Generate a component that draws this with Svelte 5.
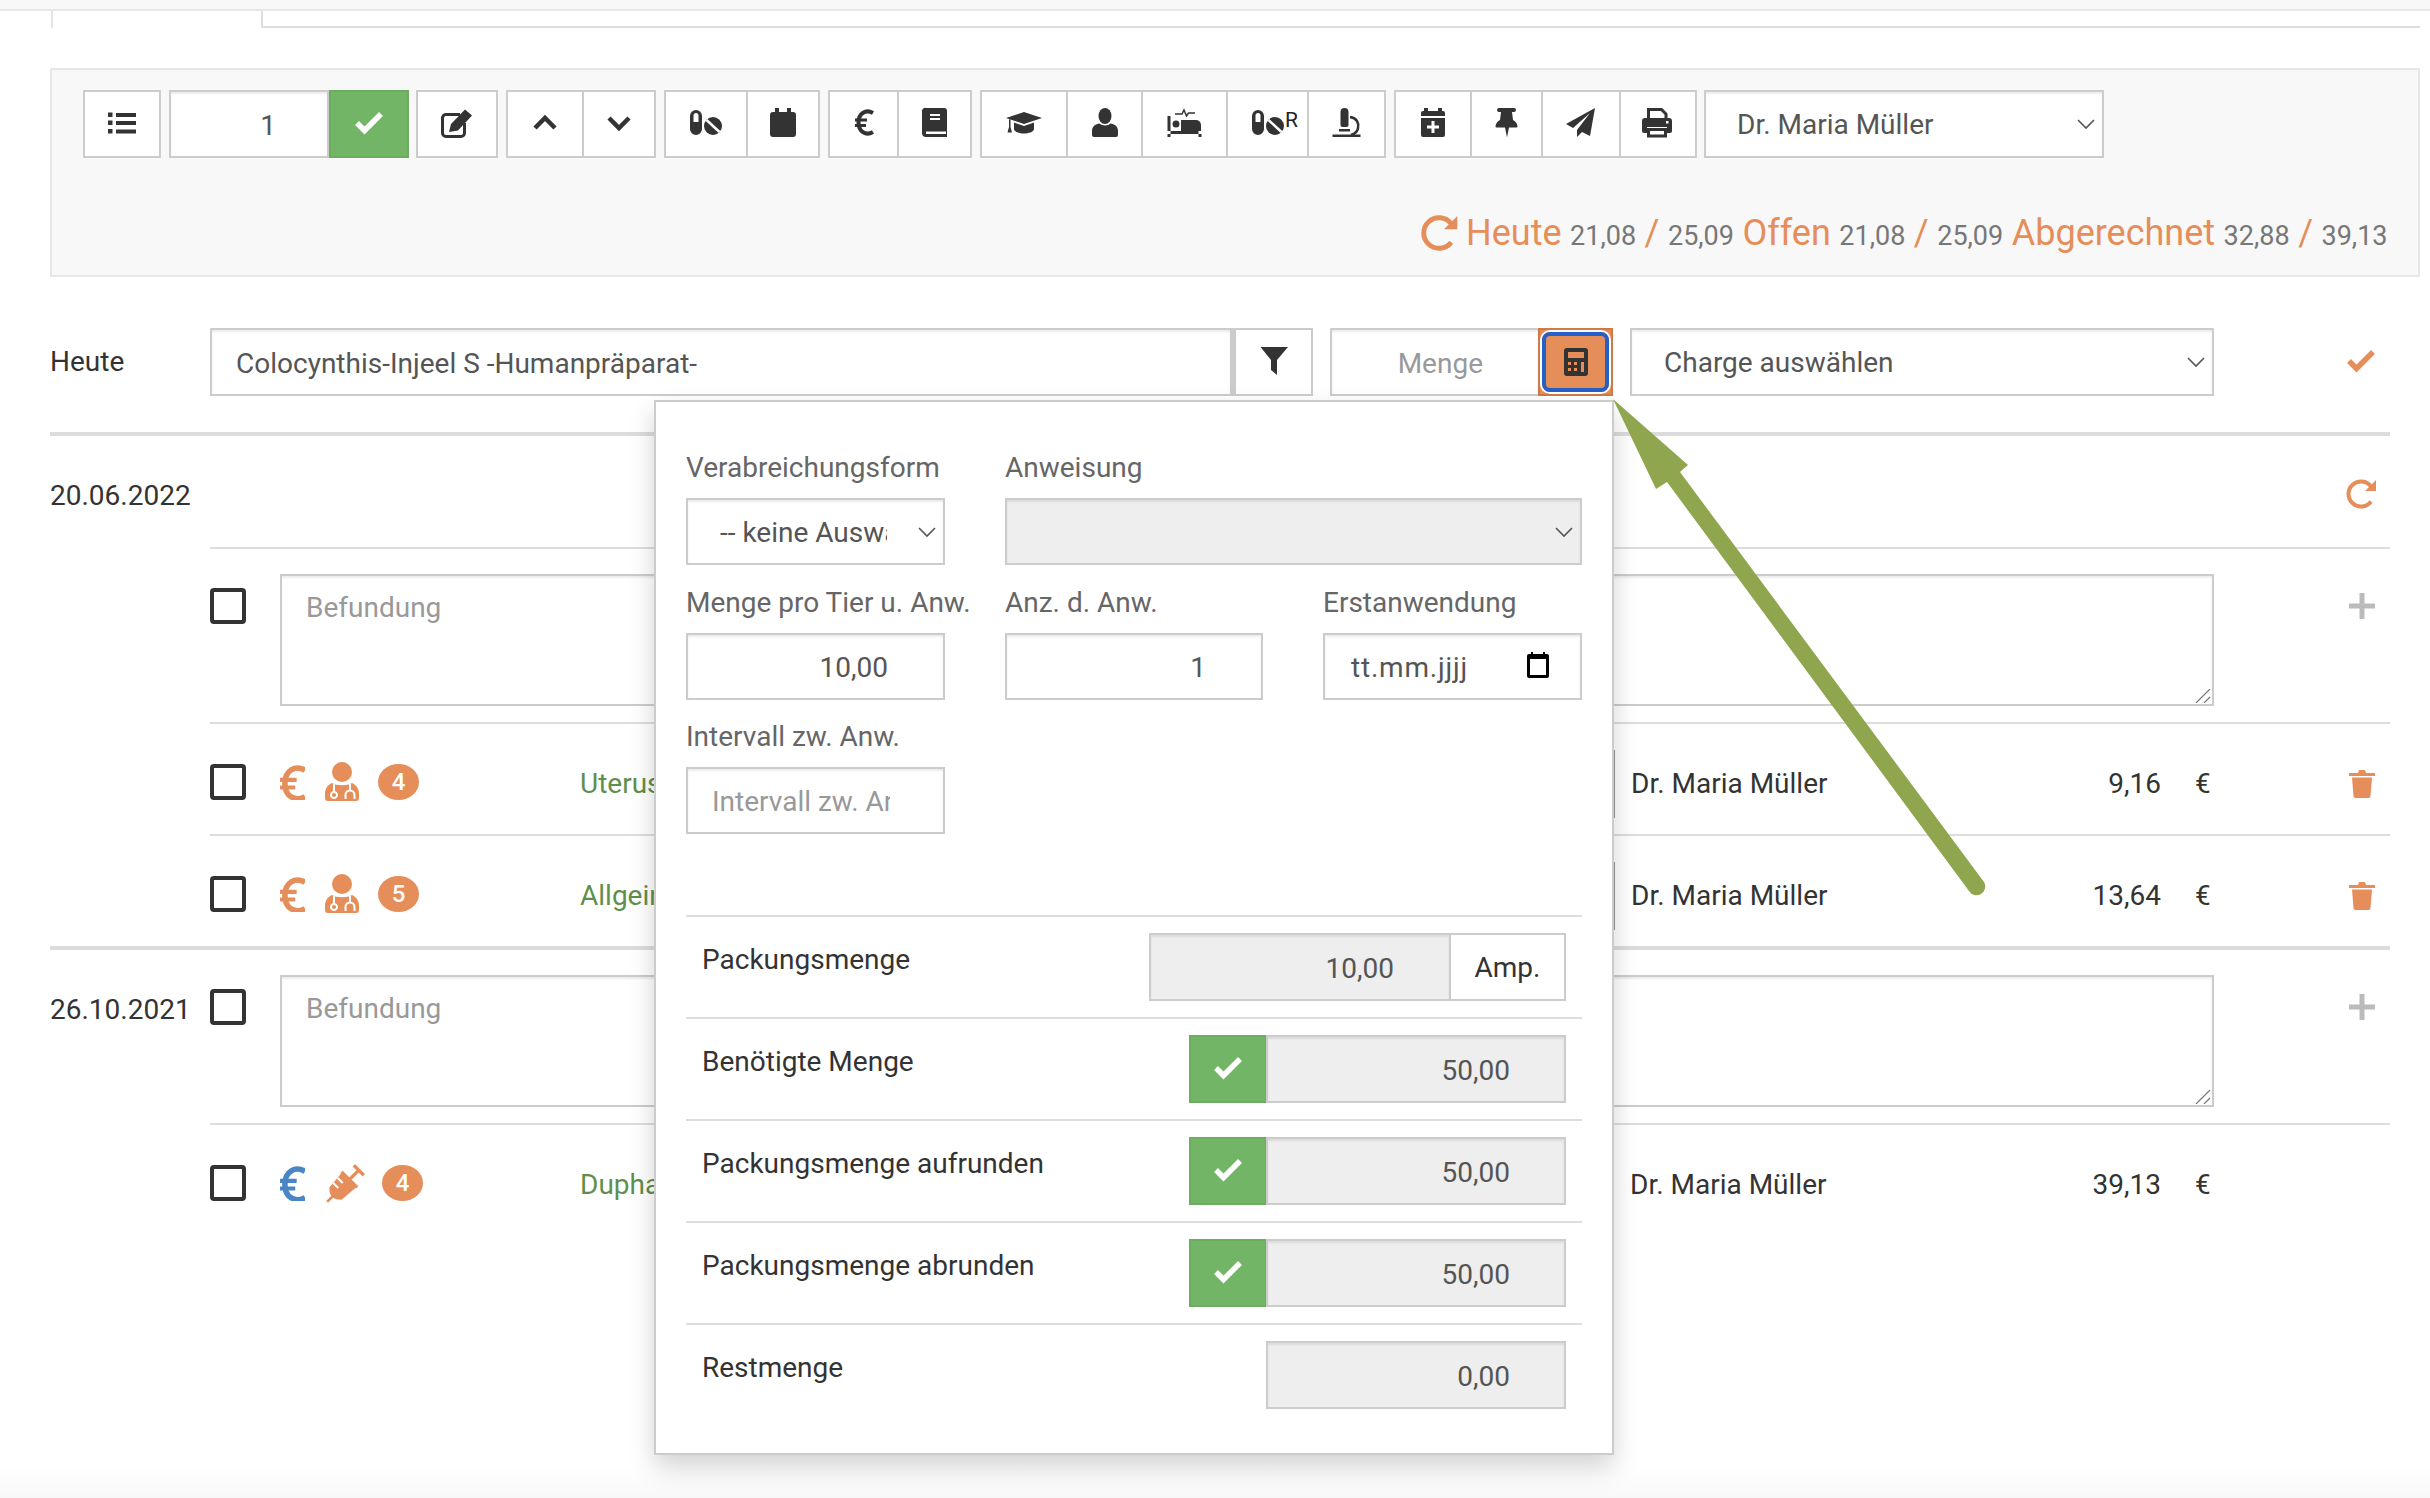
<script>
	const f = (d) => ({ d, fill: 'currentColor' });
	const s = (d, w) => ({ d, fill: 'none', stroke: 'currentColor', w });
	const cut = (d, w) => ({ d, fill: 'none', stroke: '#fff', w });

	const pills = [
		f('M8 4a6 6 0 0 1 6 6v13a6 6 0 0 1-12 0V10a6 6 0 0 1 6-6zM8 7a2.5 2.5 0 0 0-2.5 2.5V16h5V9.500A2.500 2.500 0 0 0 8 7z'),
		f('M25 11a9 9 0 1 0 0 18a9 9 0 1 0 0-18z'),
		cut('M18.500 14L31.500 26', 2.5)
	];

	const icons = {
		list: [f('M4 6.500h4.500v4.500H4zM12 7h20v4H12zM4 14.500h4.500v4.500H4zM12 15h20v4H12zM4 23h4.500v4.500H4zM12 23.500h20v4H12z')],
		check: [{ d: 'M6 17L13.500 24.500L30 8', fill: 'none', stroke: 'currentColor', w: 5.5 }],
		edit: [
			s('M21 8.500H7a3.500 3.500 0 0 0-3.500 3.500v15a3.500 3.500 0 0 0 3.500 3.500h15a3.500 3.500 0 0 0 3.500-3.500V17', 3),
			f('M10 26L12 18L26 3.500L33 9.500L19 24.500z')
		],
		up: [s('M8 22L18 12L28 22', 4.5)],
		down: [s('M8 12L18 22L28 12', 4.5)],
		pills,
		calendar: [f('M10 2h4v4h8V2h4v4h2a3 3 0 0 1 3 3v19a3 3 0 0 1-3 3H8a3 3 0 0 1-3-3V9a3 3 0 0 1 3-3h2z')],
		euro: [s('M27 7C20 3 12.500 7 12.500 16.500C12.500 26 20 30 27 26', 4), s('M9 14h12M9 19.500h11', 3)],
		book: [f('M9 2h18a3 3 0 0 1 3 3v26H9a4 4 0 0 1-4-4V5a3 3 0 0 1 4-3zM13 8v2h10V8zM13 12v2h10v-2zM9 25.500v2.500h20v-2.500z')],
		cap: [
			f('M18 6L36 12L18 18L0 12z'),
			f('M8 16.500L18 20L28 16.500V23C28 26 22 27.500 18 27.500C14 27.500 8 26 8 23z'),
			f('M3 13.500L4.500 13V21L6 26.500H1.500L3 21z')
		],
		user: [
			f('M18 2a6.500 8 0 1 0 0 16a6.500 8 0 1 0 0-16z'),
			f('M7 31a2 2 0 0 1-2-2V25C5 20 9 18 12.500 17.500C15 20 21 20 23.500 17.500C27 18 31 20 31 25V29a2 2 0 0 1-2 2z')
		],
		bed: [
			f('M0.500 10h3v21h-3zM0.500 25h34v3h-34zM31.500 25h3v6h-3z'),
			f('M9 14.500a3.500 3.500 0 1 0 0 7a3.500 3.500 0 1 0 0-7z'),
			f('M14 14h15a5 5 0 0 1 5 5v6H14z'),
			s('M8 8h7l2-4l2.500 6l2-3H28', 1.5)
		],
		microscope: [
			f('M15.500 2a4 4 0 0 1 4 4v13a2 2 0 0 1-2 2h-4a2 2 0 0 1-2-2V6a4 4 0 0 1 4-4z'),
			s('M21 11C28 12 30 17 29 22C28.500 26 25 28 22 29', 2.5),
			f('M3.500 28.500h28V31h-28zM10 23h11v2.500H10z')
		],
		calplus: [
			f('M9 2h4v3h10V2h4v3h1a2 2 0 0 1 2 2v3H6V7a2 2 0 0 1 2-2h1z'),
			f('M6 12h24v17a2 2 0 0 1-2 2H8a2 2 0 0 1-2-2zM16.500 15v4.500H12v3h4.500V27h3v-4.500H24v-3h-4.500V15z')
		],
		pin: [f('M10 2h15a2 2 0 0 1 0 4h-2l1 8c3 1.500 4.500 4 4.500 6.500a1 1 0 0 1-1 1H20l-2 10l-2-10H7.500a1 1 0 0 1-1-1C6.500 18 8 15.500 11 14l1-8h-2a2 2 0 0 1 0-4z')],
		plane: [f('M32 2L3 18L10 22L27 7L14 24V31L19 26L27 30z')],
		print: [
			f('M5 12h24a3 3 0 0 1 3 3v10a2 2 0 0 1-2 2h-3v-6H7v6H4a2 2 0 0 1-2-2V15a3 3 0 0 1 3-3zM26 15v2.500h2.500V15z'),
			s('M8.500 12V3.500h13l4.500 4.500v4', 3),
			s('M8.500 23.500h17v6.500h-17z', 3)
		],
		filter: [f('M4.500 3H32L21 16V31L15 26V16z')],
		calc: [f('M9 4h18a3 3 0 0 1 3 3v22a3 3 0 0 1-3 3H9a3 3 0 0 1-3-3V7a3 3 0 0 1 3-3zM10 8v6h16V8zM10 18v3h3v-3zM16 18v3h3v-3zM23 18v10h3V18zM10 24v3h3v-3zM16 24v3h3v-3z')],
		doctor: [
			f('M18 1a10 10 0 1 0 0 20a10 10 0 1 0 0-20z'),
			f('M8 22C4 23.500 1 28 1 32V37a3 3 0 0 0 3 3H32a3 3 0 0 0 3-3V32C35 28 32 23.500 28 22C24 25 12 25 8 22z'),
			cut('M10 23v8M10 31a3 3 0 1 0 0.010 0M26 23v6M21.500 38v-4a4.500 4.500 0 0 1 9 0v4', 2)
		],
		syringe: [
			s('M1 35L8 28', 2.5),
			f('M14 9L27 22L14 33Q8 33 5.500 30.500Q3 28 3 22z'),
			s('M21 15L30 6M25 2L34 11M14 8L28 22', 3),
			cut('M10.500 13.500l4.500 4.500M6.500 18l4.500 4.500', 2)
		],
		trash: [
			f('M5 7h9l1-3h6l1 3h9v3H5z'),
			f('M8 11.500h20l-1.500 18.500a2 2 0 0 1-2 2h-13a2 2 0 0 1-2-2z')
		],
		refresh: [s('M28 10.500A12.500 12.500 0 1 0 28 25.500', 4), f('M33 4V15H22z')],
		plus: [s('M18 5v26M5 18h26', 5)],
		chevron: [s('M10 14L18 22L26 14', 1.6)],
		datecal: [f('M9 6h2V4h2v2h10V4h2v2h2a2 2 0 0 1 2 2v20a2 2 0 0 1-2 2H9a2 2 0 0 1-2-2V8a2 2 0 0 1 2-2zM10 11v16h16V11z')]
	};

	const toolbar = [
		[['pills', 80], ['calendar', 72]],
		[['euro', 67], ['book', 73]],
		[['cap', 84], ['user', 75], ['bed', 85], ['pillsR', 81], ['microscope', 77]],
		[['calplus', 74], ['pin', 71], ['plane', 78], ['print', 76]]
	];

	const totals = [
		['Heute', '21,08', '25,09'],
		['Offen', '21,08', '25,09'],
		['Abgerechnet', '32,88', '39,13']
	];

	const section1 = [
		{ euro: 'orange', act: 'doctor', badge: 4, name: 'Uterus', price: '9,16', mark: true, del: true },
		{ euro: 'orange', act: 'doctor', badge: 5, name: 'Allgein', price: '13,64', mark: true, del: true }
	];
	const section2 = [{ euro: 'blue', act: 'syringe', badge: 4, name: 'Duphalac', price: '39,13', mark: false, del: false }];

	const calcRows = [
		{ label: 'Benötigte Menge', value: '50,00' },
		{ label: 'Packungsmenge aufrunden', value: '50,00' },
		{ label: 'Packungsmenge abrunden', value: '50,00' }
	];
</script>

{#snippet icon(name, w = 36, h = 36, vb = '0 0 36 36')}
	<svg class="ic" width={w} height={h} viewBox={vb} fill-rule="evenodd">
		{#each icons[name] as p}
			<path d={p.d} fill={p.fill} stroke={p.stroke} stroke-width={p.w} />
		{/each}
	</svg>
{/snippet}

{#snippet selectBox(text, cls, disabled = false)}
	<div class="sel {cls}">
		<select {disabled}>
			<option>{text}</option>
		</select>
		<span class="chev">{@render icon('chevron')}</span>
	</div>
{/snippet}

{#snippet befund()}
	<div class="row-note">
		<input class="box" type="checkbox" />
		<div class="note-wrap">
			<textarea class="note" placeholder="Befundung"></textarea>
			<svg class="grip" width="16" height="14" viewBox="0 0 16 14">
				<path d="M1 14L15 0M9 14L15 8" fill="none" stroke="#777" stroke-width="1.2" />
			</svg>
		</div>
		<span class="act plus">{@render icon('plus')}</span>
	</div>
{/snippet}

{#snippet medRow(m)}
	<div class="row-med">
		<input class="box" type="checkbox" />
		<div class="marks">
			<span class={m.euro}>{@render icon('euro', 25, 36, '9 2.5 18 26')}</span>
			{#if m.act === 'doctor'}
				<span class="orange">{@render icon('doctor', 36, 42, '0 0 36 42')}</span>
			{:else}
				<span class="orange syr">{@render icon('syringe', 40, 40)}</span>
			{/if}
			<span class="badge">{m.badge}</span>
		</div>
		<div class="drug">{m.name}</div>
		<div class="who" class:mark={m.mark}>Dr. Maria Müller</div>
		<div class="price">{m.price}</div>
		<div class="cur">€</div>
		<span class="act orange">
			{#if m.del}{@render icon('trash')}{/if}
		</span>
	</div>
{/snippet}

<div class="page">
	<div class="topbar"></div>
	<div class="tabs"><div class="tab"></div><div class="tab-rest"></div></div>

	<div class="panel">
		<div class="toolbar">
			<div class="group"><button>{@render icon('list')}</button></div>
			<div class="qty">
				<input class="num" value="1" />
				<button class="ok">{@render icon('check')}</button>
			</div>
			<div class="group"><button class="edit">{@render icon('edit')}</button></div>
			<div class="group">
				<button style="width:74px">{@render icon('up')}</button>
				<button style="width:72px">{@render icon('down')}</button>
			</div>
			{#each toolbar as group}
				<div class="group">
					{#each group as [name, width]}
						<button style="width:{width}px">
							{#if name === 'pillsR'}
								<span class="pills-r">{@render icon('pills')}<span class="r">R</span></span>
							{:else}
								{@render icon(name)}
							{/if}
						</button>
					{/each}
				</div>
			{/each}
			{@render selectBox('Dr. Maria Müller', 'doc-sel')}
		</div>
		<div class="totals">
			<span class="orange refresh">{@render icon('refresh', 44, 44)}</span>
			{#each totals as [label, a, b]}
				<span class="t-label">{label}</span>
				{' '}<span class="t-num">{a}</span>{' '}<span class="t-label">/</span>{' '}<span class="t-num">{b}</span>{' '}
			{/each}
		</div>
	</div>

	<div class="main">
		<div class="today">
			<div class="today-label">Heute</div>
			<div class="search">
				<input value="Colocynthis-Injeel S -Humanpräparat-" />
				<button class="filter">{@render icon('filter')}</button>
			</div>
			<div class="amount">
				<input class="num" placeholder="Menge" />
				<button class="calc"><span class="ring">{@render icon('calc')}</span></button>
			</div>
			{@render selectBox('Charge auswählen', 'charge')}
			<span class="act orange">{@render icon('check')}</span>
		</div>

		<div class="section">
			<div class="date">20.06.2022</div>
			<div class="rows">
				<div class="row-head"><span class="act orange">{@render icon('refresh')}</span></div>
				{@render befund()}
				{#each section1 as m}
					{@render medRow(m)}
				{/each}
			</div>
		</div>
		<div class="section last">
			<div class="date">26.10.2021</div>
			<div class="rows">
				{@render befund()}
				{#each section2 as m}
					{@render medRow(m)}
				{/each}
			</div>
		</div>
	</div>

	<div class="footer"></div>

	<div class="popup">
		<div class="form">
			<div class="field">
				<label for="form-a">Verabreichungsform</label>
				{@render selectBox('-- keine Auswahl --', 'short')}
			</div>
			<div class="field wide">
				<label for="form-b">Anweisung</label>
				{@render selectBox('', 'off', true)}
			</div>
			<div class="field">
				<label for="dose">Menge pro Tier u. Anw.</label>
				<input id="dose" class="num" value="10,00" />
			</div>
			<div class="field">
				<label for="count">Anz. d. Anw.</label>
				<input id="count" class="num" value="1" />
			</div>
			<div class="field">
				<label for="first">Erstanwendung</label>
				<div class="date-in">
					<input id="first" value="tt.mm.jjjj" />
					<span class="cal">{@render icon('datecal')}</span>
				</div>
			</div>
			<div class="field">
				<label for="gap">Intervall zw. Anw.</label>
				<input id="gap" class="gap" placeholder="Intervall zw. Anw." />
			</div>
		</div>

		<div class="calc-rows">
			<div class="calc-row">
				<span>Packungsmenge</span>
				<div class="ctl">
					<input class="num ro pack" value="10,00" readonly />
					<span class="unit">Amp.</span>
				</div>
			</div>
			{#each calcRows as r}
				<div class="calc-row">
					<span>{r.label}</span>
					<div class="ctl">
						<button class="ok small">{@render icon('check')}</button>
						<input class="num ro res" value={r.value} readonly />
					</div>
				</div>
			{/each}
			<div class="calc-row">
				<span>Restmenge</span>
				<div class="ctl"><input class="num ro res" value="0,00" readonly /></div>
			</div>
		</div>
	</div>

	<svg class="arrow" width="400" height="510" viewBox="1600 390 400 510">
		<path d="M1613 399L1688 465L1680 472L1984 882A8.500 8.500 0 0 1 1969 891L1667 482L1656 489z" fill="#8fa64e" />
	</svg>
</div>

<style>
	:global(body) {
		margin: 0;
		background: #fff;
	}

	* {
		box-sizing: border-box;
	}

	.page {
		position: relative;
		width: 2430px;
		height: 1498px;
		overflow: hidden;
		display: flex;
		flex-direction: column;
		font-family: Roboto, 'Liberation Sans', sans-serif;
		font-size: 28px;
		line-height: 40px;
		color: #333;
	}

	input,
	select,
	textarea,
	button {
		font: inherit;
		color: #555;
		margin: 0;
		border-radius: 0;
		outline: none;
	}

	input,
	select,
	textarea {
		height: 68px;
		width: 100%;
		border: 2px solid #ccc;
		background: #fff;
		box-shadow: inset 0 2px 2px rgba(0, 0, 0, 0.075);
	}

	input::placeholder,
	textarea::placeholder {
		color: #999;
		opacity: 1;
	}

	.num {
		text-align: right;
		padding: 2px 55px 0 10px;
	}

	.ic {
		display: block;
		flex: none;
	}

	.orange {
		color: #e58e5a;
	}

	.blue {
		color: #4a86c5;
	}

	.topbar {
		flex: none;
		height: 11px;
		background: #f8f8f8;
		border-bottom: 2px solid #e7e7e7;
	}

	.tabs {
		flex: none;
		display: flex;
		height: 17px;
		margin: 0 10px 0 51px;
	}

	.tab {
		width: 210px;
		border-left: 2px solid #e4e4e4;
	}

	.tab-rest {
		flex: 1;
		border-left: 2px solid #ddd;
		border-bottom: 2px solid #ddd;
	}

	.panel {
		flex: none;
		height: 209px;
		margin: 40px 10px 0 50px;
		padding: 20px 31px 0;
		background: #f8f8f8;
		border: 2px solid #e7e7e7;
	}

	.toolbar {
		display: flex;
		gap: 8px;
		height: 68px;
	}

	.group {
		display: flex;
		flex: none;
		border: 2px solid #ccc;
		background: #fff;
	}

	.group button {
		display: flex;
		align-items: center;
		justify-content: center;
		width: 74px;
		height: 64px;
		padding: 0;
		border: none;
		border-left: 2px solid #ccc;
		background: #fff;
		color: #333;
	}

	.group button:first-child {
		border-left: none;
	}

	.group button.edit {
		width: 78px;
	}

	.qty {
		display: flex;
		flex: none;
		width: 240px;
		margin-right: -1px;
	}

	.qty .num {
		width: 160px;
		padding-right: 51px;
	}

	.ok {
		display: flex;
		align-items: center;
		justify-content: center;
		flex: none;
		width: 80px;
		height: 68px;
		padding: 0;
		border: 2px solid #6bae5e;
		background: #73b567;
		color: #fff;
	}

	.pills-r {
		display: flex;
		align-items: flex-start;
	}

	.r {
		width: 12px;
		margin: 2px -12px 0 -1px;
		font-size: 21px;
		line-height: 24px;
		color: #222;
	}

	.sel {
		position: relative;
		flex: none;
	}

	.sel select {
		appearance: none;
		display: block;
		padding: 2px 56px 0 31px;
	}

	.sel select:disabled {
		background: #eee;
		opacity: 1;
	}

	.chev {
		position: absolute;
		right: 0;
		top: 16px;
		color: #555;
	}

	.doc-sel {
		width: 400px;
		margin-left: -1px;
	}

	.totals {
		display: flex;
		align-items: baseline;
		justify-content: flex-end;
		white-space: pre;
		height: 44px;
		margin: 53px -9px 0 0;
		color: #777;
		line-height: 44px;
	}

	.refresh {
		align-self: center;
		margin-right: 5px;
	}

	.t-label {
		color: #e58e5a;
		font-size: 36px;
	}

	.t-num {
		margin: 0 8.5px;
		font-size: 27px;
	}

	.main {
		flex: none;
		width: 2340px;
		margin: 51px 0 0 50px;
	}

	.today {
		display: flex;
		align-items: center;
		height: 108px;
		padding-bottom: 36px;
		border-bottom: 4px solid #dcdcdc;
	}

	.today-label {
		flex: none;
		width: 160px;
	}

	.search {
		display: flex;
		flex: none;
		width: 1103px;
	}

	.search input {
		flex: 1;
		padding: 2px 24px 0;
	}

	.filter {
		display: flex;
		align-items: center;
		justify-content: center;
		flex: none;
		width: 81px;
		height: 68px;
		padding: 0;
		background: #fff;
		border: 2px solid #ccc;
		border-left-width: 4px;
		color: #333;
	}

	.amount {
		display: flex;
		flex: none;
		width: 283px;
		margin-left: 17px;
	}

	.amount input {
		border-right: none;
	}

	.calc {
		display: flex;
		flex: none;
		width: 75px;
		height: 68px;
		padding: 0;
		background: #e58e5a;
		border: 2px solid #cf7a47;
		color: #333;
	}

	.ring {
		display: flex;
		align-items: center;
		justify-content: center;
		width: 100%;
		margin: 2px;
		border: 4px solid #2460c6;
		border-radius: 8px;
		box-shadow: 0 0 0 2px #fff;
	}

	.charge {
		width: 584px;
		margin-left: 17px;
	}

	.charge select {
		padding-left: 32px;
	}

	.today .act {
		margin-left: auto;
		margin-right: 11px;
		margin-top: -1px;
	}

	.section {
		display: flex;
		border-bottom: 4px solid #dcdcdc;
	}

	.section.last {
		border-bottom: none;
	}

	.date {
		flex: none;
		width: 160px;
		padding-top: 40px;
	}

	.rows {
		flex: 1;
	}

	.row-head {
		display: flex;
		justify-content: flex-end;
		align-items: center;
		height: 113px;
		padding: 5px 11px 0 0;
		border-bottom: 2px solid #ddd;
	}

	.act {
		display: block;
		flex: none;
		width: 36px;
		height: 36px;
	}

	.plus {
		color: #bbb;
		margin: 14px 10px 0 auto;
	}

	.row-note {
		display: flex;
		align-items: flex-start;
		padding: 25px 0 16px;
		border-bottom: 2px solid #ddd;
	}

	.box {
		appearance: none;
		flex: none;
		width: 36px;
		height: 36px;
		margin: 0;
		background: #fff;
		border: 4px solid #333;
		border-radius: 4px;
		box-shadow: none;
	}

	.row-note .box {
		margin-top: 14px;
	}

	.note-wrap {
		position: relative;
		flex: none;
		width: 1934px;
		height: 132px;
		margin-left: 34px;
	}

	.note {
		display: block;
		height: 132px;
		padding: 12px 24px;
		resize: none;
	}

	.grip {
		position: absolute;
		right: 3px;
		bottom: 3px;
	}

	.row-med {
		display: grid;
		grid-template-columns: 70px 300px 1034px 386px 161px 183px 36px;
		align-items: center;
		align-content: start;
		height: 112px;
		padding-top: 26px;
		border-bottom: 2px solid #ddd;
	}

	.rows > .row-med:last-child {
		border-bottom: none;
		height: 110px;
	}

	.row-med .box,
	.marks {
		margin-bottom: 4px;
	}

	.marks {
		display: flex;
		align-items: center;
		gap: 19px;
	}

	.syr {
		margin: 0 -2px 0 2px;
	}

	.badge {
		width: 41px;
		height: 36px;
		margin-left: -1px;
		border-radius: 50%;
		background: #e58e5a;
		color: #fff;
		font-size: 24px;
		font-weight: 500;
		line-height: 36px;
		text-align: center;
	}

	.drug {
		color: #5f8f4c;
	}

	.who {
		height: 68px;
		line-height: 68px;
		padding-left: 16px;
	}

	.who.mark {
		border-left: 1px solid #999;
	}

	.price {
		text-align: right;
	}

	.cur {
		padding-left: 34px;
	}

	.footer {
		flex: none;
		height: 32px;
		margin-top: auto;
		background: linear-gradient(#fff, #f8f8f8);
	}

	.popup {
		position: absolute;
		left: 654px;
		top: 400px;
		width: 960px;
		height: 1055px;
		padding: 46px 30px 0;
		background: #fff;
		border: 2px solid #ccc;
		box-shadow: 0 12px 24px rgba(0, 0, 0, 0.175);
	}

	.form {
		display: grid;
		grid-template-columns: 259px 258px 259px;
		column-gap: 60px;
		row-gap: 17.5px;
	}

	.field label {
		display: block;
		height: 40px;
		margin-bottom: 10px;
		color: #666;
		white-space: nowrap;
	}

	.field input,
	.field select {
		height: 67px;
	}

	.wide {
		grid-column: span 2;
	}

	.short select {
		padding-left: 32px;
	}

	.date-in {
		position: relative;
	}

	.date-in input {
		padding: 2px 0 0 26px;
		letter-spacing: 0.8px;
	}

	.cal {
		position: absolute;
		right: 26px;
		top: 15px;
		color: #000;
	}

	.gap {
		padding: 2px 53px 0 24px;
	}

	.calc-rows {
		margin-top: 81px;
	}

	.calc-row {
		display: flex;
		justify-content: space-between;
		height: 102px;
		padding: 16px 16px 0 16px;
		border-top: 2px solid #ddd;
	}

	.calc-row > span {
		padding-top: 7px;
	}

	.ctl {
		display: flex;
		justify-content: flex-end;
	}

	.ro {
		height: 68px;
		background: #eee;
	}

	.pack {
		width: 300px;
		border-right: none;
	}

	.res {
		width: 300px;
		margin-left: -1px;
		padding-right: 54px;
	}

	.unit {
		width: 117px;
		height: 68px;
		border: 2px solid #ccc;
		color: #333;
		line-height: 66px;
		text-align: center;
	}

	.ok.small {
		width: 78px;
	}

	.arrow {
		position: absolute;
		left: 1600px;
		top: 390px;
	}
</style>
